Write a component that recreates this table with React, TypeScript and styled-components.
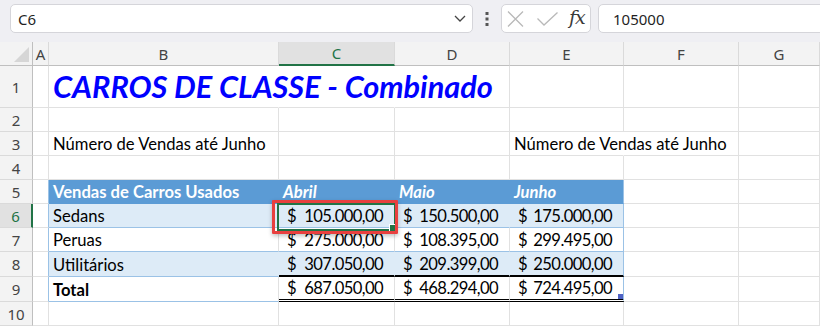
import styled, { createGlobalStyle } from "styled-components";

const GRID = "#e1e1e1";
const HEAD_LINE = "#bfbfbf";
const TBL_HEAD = "#5b9bd5";
const TBL_BAND = "#ddebf7";
const TBL_LINE = "#9bc2e6";
const XL_GREEN = "#217346";

const GlobalStyle = createGlobalStyle`
  html, body {
    margin: 0;
    padding: 0;
    background: #ffffff;
  }
  body {
    width: 820px;
    height: 326px;
    overflow: hidden;
    font-family: "Noto Sans", "Open Sans", sans-serif;
  }
`;

const FormulaBar = styled.div`
  height: 42px;
  box-sizing: border-box;
  padding: 4px 0 0 10px;
  display: flex;
  align-items: flex-start;
  background: #efeff3;
  overflow: hidden;
`;

const Box = styled.div`
  height: 29px;
  box-sizing: border-box;
  border: 1px solid #d5d5da;
  border-radius: 5px;
  background: #ffffff;
  display: flex;
  align-items: center;
  flex-shrink: 0;
`;

const NameBox = styled(Box)`
  width: 463px;
  justify-content: space-between;
  padding: 0 6px 0 7px;
  font-size: 15px;
  color: #1f1f1f;
`;

const Dots = styled.div`
  width: 28px;
  height: 29px;
  flex-shrink: 0;
  display: flex;
  align-items: center;
  justify-content: center;
`;

const FxGroup = styled(Box)`
  width: 90px;
  padding-left: 5px;
`;

const FxLabel = styled.span`
  font-family: "DejaVu Serif", "Liberation Serif", serif;
  font-style: italic;
  font-size: 19px;
  color: #3a3a3a;
  margin-left: 11px;
  letter-spacing: -1px;
  line-height: 1;
  padding-bottom: 3px;
`;

const FormulaInput = styled(Box)`
  width: 240px;
  margin-left: 7px;
  padding-left: 14px;
  font-size: 15px;
  color: #1f1f1f;
`;

const Sheet = styled.div`
  display: grid;
  grid-template-columns: 33px 16px 230px 116px 115px 114px 115px 1fr;
  grid-template-rows: 24px 42px repeat(6, 24px) 25px 25px 24px;
  font-family: "Lato", "Open Sans", sans-serif;
`;

const Corner = styled.div`
  background: #f3f3f3;
  border-right: 1px solid ${HEAD_LINE};
  border-bottom: 1px solid ${HEAD_LINE};
  display: flex;
  align-items: flex-end;
  justify-content: flex-end;
  padding: 0 3px 3px 0;
`;

const ColHead = styled.div<{ $active?: boolean }>`
  background: ${(p) => (p.$active ? "#e1e1e1" : "#f3f3f3")};
  border-right: 1px solid #dadada;
  border-bottom: ${(p) => (p.$active ? `2px solid ${XL_GREEN}` : `1px solid ${HEAD_LINE}`)};
  color: ${(p) => (p.$active ? XL_GREEN : "#444444")};
  font-family: "Noto Sans", sans-serif;
  font-size: 15px;
  display: flex;
  align-items: center;
  justify-content: center;
`;

const RowHead = styled.div<{ $active?: boolean }>`
  background: ${(p) => (p.$active ? "#e1e1e1" : "#f3f3f3")};
  border-right: ${(p) => (p.$active ? `2px solid ${XL_GREEN}` : `1px solid ${HEAD_LINE}`)};
  border-bottom: 1px solid #dadada;
  color: ${(p) => (p.$active ? XL_GREEN : "#444444")};
  font-family: "Noto Sans", sans-serif;
  font-size: 15px;
  display: flex;
  align-items: center;
  justify-content: center;
`;

interface CellProps {
  $bg?: string;
  $right?: string;
  $bottom?: string;
  $bold?: boolean;
  $italic?: boolean;
  $color?: string;
  $money?: boolean;
  $z?: number;
}

const Cell = styled.div<CellProps>`
  position: relative;
  z-index: ${(p) => p.$z ?? 0};
  box-sizing: border-box;
  min-width: 0;
  background: ${(p) => p.$bg ?? "transparent"};
  border-right: 1px solid ${(p) => p.$right ?? GRID};
  border-bottom: ${(p) => p.$bottom ?? `1px solid ${GRID}`};
  display: flex;
  align-items: flex-end;
  justify-content: ${(p) => (p.$money ? "space-between" : "flex-start")};
  padding: ${(p) => (p.$money ? "0 11px 1px 8px" : "0 0 1px 4px")};
  font-size: 16.6px;
  letter-spacing: ${(p) => (p.$money ? "-0.6px" : "0")};
  line-height: 20px;
  font-weight: ${(p) => (p.$bold ? 700 : 400)};
  font-style: ${(p) => (p.$italic ? "italic" : "normal")};
  color: ${(p) => p.$color ?? "#000000"};
  white-space: nowrap;
  overflow: visible;
`;

const Title = styled.span`
  font-size: 30.7px;
  line-height: 36px;
  font-weight: 700;
  font-style: italic;
  color: #0000ff;
  padding-bottom: 1px;
`;

const Selection = styled.div`
  position: absolute;
  left: -2px;
  top: -1px;
  width: 119px;
  height: 28px;
  box-sizing: border-box;
  border: 2px solid ${XL_GREEN};
  pointer-events: none;
`;

const FillHandle = styled.div`
  position: absolute;
  right: -3px;
  bottom: -3px;
  width: 6px;
  height: 6px;
  background: ${XL_GREEN};
  border: 1px solid #ffffff;
`;

const Highlight = styled.div`
  position: absolute;
  left: -7px;
  top: -4px;
  width: 126px;
  height: 34px;
  box-sizing: border-box;
  border: 3px solid #e8403f;
  border-radius: 1px;
  box-shadow: 0 2px 4px rgba(0, 0, 0, 0.25);
  pointer-events: none;
`;

const ResizeHandle = styled.div`
  position: absolute;
  right: 0;
  bottom: 0;
  width: 5px;
  height: 5px;
  background: #4f62c4;
`;

const months = ["Abril", "Maio", "Junho"];

const sales = [
  { label: "Sedans", values: ["105.000,00", "150.500,00", "175.000,00"] },
  { label: "Peruas", values: ["275.000,00", "108.395,00", "299.495,00"] },
  { label: "Utilitários", values: ["307.050,00", "209.399,00", "250.000,00"] },
];

const totals = ["687.050,00", "468.294,00", "724.495,00"];

const columns = ["A", "B", "C", "D", "E", "F", "G"];

const Money = ({ value }: { value: string }) => (
  <>
    <span>$</span>
    <span>{value}</span>
  </>
);

const ChevronDown = () => (
  <svg width="12" height="7" viewBox="0 0 12 7">
    <polyline points="1,1 6,6 11,1" fill="none" stroke="#444" strokeWidth="1.3" />
  </svg>
);

const VDots = () => (
  <svg width="4" height="16" viewBox="0 0 4 16">
    <rect x="0.5" y="1" width="3" height="3" fill="#555" />
    <rect x="0.5" y="6.5" width="3" height="3" fill="#555" />
    <rect x="0.5" y="12" width="3" height="3" fill="#555" />
  </svg>
);

const CancelIcon = () => (
  <svg width="17" height="16" viewBox="0 0 17 16">
    <path d="M1 0.5 L16 15.5 M16 0.5 L1 15.5" stroke="#b9b9b9" strokeWidth="1.3" fill="none" />
  </svg>
);

const EnterIcon = () => (
  <svg width="21" height="14" viewBox="0 0 21 14" style={{ marginLeft: 13 }}>
    <polyline points="0.5,6.5 7,13 20.5,0.5" stroke="#b9b9b9" strokeWidth="1.3" fill="none" />
  </svg>
);

const CornerTriangle = () => (
  <svg width="15" height="15" viewBox="0 0 15 15">
    <polygon points="15,0 15,15 0,15" fill="#d6d6d6" />
  </svg>
);

const EmptyRow = ({ n }: { n: number }) => (
  <>
    <RowHead>{n}</RowHead>
    {columns.map((c) => (
      <Cell key={c} />
    ))}
  </>
);

const App = () => {
  return (
    <>
      <GlobalStyle />
      <FormulaBar>
        <NameBox>
          <span>C6</span>
          <ChevronDown />
        </NameBox>
        <Dots>
          <VDots />
        </Dots>
        <FxGroup>
          <CancelIcon />
          <EnterIcon />
          <FxLabel>fx</FxLabel>
        </FxGroup>
        <FormulaInput>105000</FormulaInput>
      </FormulaBar>

      <Sheet>
        <Corner>
          <CornerTriangle />
        </Corner>
        {columns.map((c) => (
          <ColHead key={c} $active={c === "C"}>
            {c}
          </ColHead>
        ))}

        {/* row 1 */}
        <RowHead>1</RowHead>
        <Cell />
        <Cell $right="#ffffff" $z={2}>
          <Title>CARROS DE CLASSE - Combinado</Title>
        </Cell>
        <Cell $right="#ffffff" />
        <Cell />
        <Cell />
        <Cell />
        <Cell />

        <EmptyRow n={2} />

        {/* row 3 */}
        <RowHead>3</RowHead>
        <Cell />
        <Cell $z={2}>Número de Vendas até Junho</Cell>
        <Cell />
        <Cell />
        <Cell $right="#ffffff" $z={2}>
          Número de Vendas até Junho
        </Cell>
        <Cell />
        <Cell />

        <EmptyRow n={4} />

        {/* row 5 - table header */}
        <RowHead>5</RowHead>
        <Cell $right={TBL_LINE} />
        <Cell $bg={TBL_HEAD} $right={TBL_HEAD} $bottom={`1px solid ${TBL_HEAD}`} $bold $color="#ffffff">
          Vendas de Carros Usados
        </Cell>
        {months.map((m, i) => (
          <Cell
            key={m}
            $bg={TBL_HEAD}
            $right={i === 2 ? TBL_LINE : TBL_HEAD}
            $bottom={`1px solid ${TBL_HEAD}`}
            $bold
            $italic
            $color="#ffffff"
          >
            {m}
          </Cell>
        ))}
        <Cell />
        <Cell />

        {/* rows 6-8 - data */}
        {sales.map((row, r) => {
          const banded = r % 2 === 0;
          const bg = banded ? TBL_BAND : "#ffffff";
          const inner = banded ? TBL_BAND : GRID;
          const last = r === sales.length - 1;
          return (
            <>
              <RowHead key={`h${r}`} $active={r === 0}>
                {r + 6}
              </RowHead>
              <Cell key={`a${r}`} $right={TBL_LINE} />
              <Cell key={`b${r}`} $bg={bg} $right={inner} $bottom={`1px solid ${TBL_LINE}`}>
                {row.label}
              </Cell>
              {row.values.map((v, i) => {
                const selected = r === 0 && i === 0;
                return (
                  <Cell
                    key={`v${r}${i}`}
                    $money
                    $z={selected ? 5 : 0}
                    $bg={bg}
                    $right={i === 2 ? TBL_LINE : inner}
                    $bottom={last ? "2px solid #000000" : `1px solid ${TBL_LINE}`}
                  >
                    <Money value={v} />
                    {selected && (
                      <>
                        <Selection>
                          <FillHandle />
                        </Selection>
                        <Highlight />
                      </>
                    )}
                  </Cell>
                );
              })}
              <Cell key={`f${r}`} />
              <Cell key={`g${r}`} />
            </>
          );
        })}

        {/* row 9 - total */}
        <RowHead>9</RowHead>
        <Cell $right={TBL_LINE} />
        <Cell $bottom={`1px solid ${TBL_LINE}`} $bold>
          Total
        </Cell>
        {totals.map((v, i) => (
          <Cell key={v} $money $right={i === 2 ? TBL_LINE : GRID} $bottom="3px double #000000">
            <Money value={v} />
            {i === 2 && <ResizeHandle />}
          </Cell>
        ))}
        <Cell />
        <Cell />

        <EmptyRow n={10} />
      </Sheet>
    </>
  );
};

export default App;
